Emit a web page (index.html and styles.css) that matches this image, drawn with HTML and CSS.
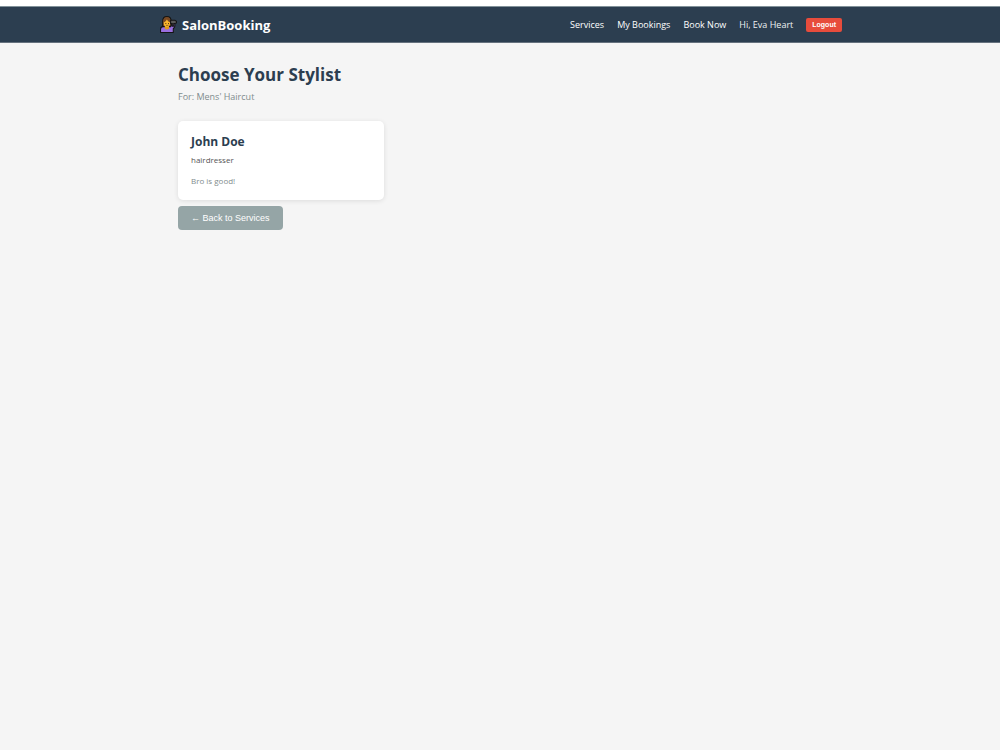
FILE: index.html
```html
<!DOCTYPE html>
<html lang="en">
<head>
    <meta charset="UTF-8">
    <meta name="viewport" content="width=device-width, initial-scale=1.0">
    <title>SalonBooking</title>
    <link rel="stylesheet" href="styles.css">
</head>
<body>
    <header class="navbar">
        <div class="nav-container">
            <a class="nav-logo" href="#">
                <svg class="logo-icon" viewBox="0 0 32 32" aria-hidden="true">
                    <path d="M5 22V10c0-6 3-9 8-9s8 3 8 9v12z" fill="#7a4a24" stroke="#141414" stroke-width="2"/>
                    <path d="M1 31v-6c0-3 2-5 5-5h14l3-6h5v5c0 2-2 4-3 5v7z" fill="#9a6fe0" stroke="#141414" stroke-width="2"/>
                    <path d="M9 17h8v6c-2 3-6 3-8 0z" fill="#e09a1c"/>
                    <ellipse cx="13" cy="13" rx="6" ry="7" fill="#fbb62c"/>
                    <path d="M6 12c4-1 6-3 7-6 1 3 3 5 7 6 0-6-2-9-7-9s-7 3-7 9z" fill="#7a4a24"/>
                    <circle cx="11" cy="14" r="1" fill="#2b1a10"/>
                    <circle cx="16" cy="14" r="1" fill="#2b1a10"/>
                    <path d="M11 17c1 1 4 1 5 0" fill="none" stroke="#2b1a10"/>
                    <path d="M20 8h8l3 2v3l-3 1h-2v5h-3v-5h-3z" fill="#5b5b5b" stroke="#141414" stroke-width="2"/>
                </svg>
                <span>SalonBooking</span>
            </a>
            <nav class="nav-menu">
                <a href="#">Services</a>
                <a href="#">My Bookings</a>
                <a href="#">Book Now</a>
                <span class="nav-user">Hi, Eva Heart</span>
                <button class="btn-logout" type="button">Logout</button>
            </nav>
        </div>
    </header>

    <main class="container">
        <h1>Choose Your Stylist</h1>
        <p class="subtitle">For: Mens' Haircut</p>

        <div class="stylists-grid">
            <div class="stylist-card">
                <h3>John Doe</h3>
                <p class="specialty">hairdresser</p>
                <p class="bio">Bro is good!</p>
            </div>
        </div>

        <button class="btn-back" type="button">← Back to Services</button>
    </main>
</body>
</html>
```
FILE: styles.css
```css
* {
    margin: 0;
    padding: 0;
    box-sizing: border-box;
}

body {
    font-family: "Open Sans", "Noto Sans", sans-serif;
    font-size: 8px;
    background-color: #f5f5f5;
    color: #333;
    border-top: 6px solid #fff;
}

.navbar {
    background-color: #2c3e50;
    border-top: 1px solid #82929a;
    border-bottom: 1px solid #66727e;
}

.nav-container {
    max-width: 684px;
    min-height: 35px;
    margin: 0 auto;
    display: flex;
    justify-content: space-between;
    align-items: center;
}

.nav-logo {
    display: flex;
    align-items: center;
    gap: 5px;
    padding-left: 2px;
    font-size: 13px;
    font-weight: 700;
    color: #fff;
    text-decoration: none;
}

.logo-icon {
    width: 17px;
    height: 17px;
}

.nav-menu {
    display: flex;
    align-items: center;
    gap: 13px;
    font-size: 9px;
}

.nav-menu a {
    color: #fff;
    text-decoration: none;
}

.nav-user {
    color: #ecf0f1;
}

.btn-logout {
    padding: 2px 6px;
    border: none;
    border-radius: 2px;
    background-color: #e74c3c;
    color: #fff;
    font-family: "Liberation Sans", Arial, sans-serif;
    font-size: 7px;
    font-weight: 700;
    line-height: 10px;
    cursor: pointer;
}

.container {
    max-width: 684px;
    margin: 0 auto;
    padding: 20px;
}

h1 {
    font-size: 17px;
    line-height: 24px;
    color: #2c3e50;
}

.subtitle {
    margin-bottom: 14px;
    font-size: 9px;
    line-height: 20px;
    color: #7f8c8d;
}

.stylists-grid {
    display: grid;
    grid-template-columns: repeat(3, 1fr);
    gap: 13px;
    margin-bottom: 6px;
}

.stylist-card {
    padding: 13px;
    border-radius: 5px;
    background-color: #fff;
    box-shadow: 0 1px 5px rgba(0, 0, 0, 0.1);
}

.stylist-card h3 {
    font-size: 12px;
    line-height: 16px;
    color: #2c3e50;
}

.specialty {
    margin: 4px 0 8px;
    line-height: 12px;
    color: #555;
}

.bio {
    line-height: 13px;
    color: #7f8c8d;
}

.btn-back {
    padding: 6px 13px;
    border: none;
    border-radius: 4px;
    background-color: #95a5a6;
    color: #fff;
    font-family: "Liberation Sans", Arial, sans-serif;
    font-size: 9px;
    line-height: 12px;
    cursor: pointer;
}
```
